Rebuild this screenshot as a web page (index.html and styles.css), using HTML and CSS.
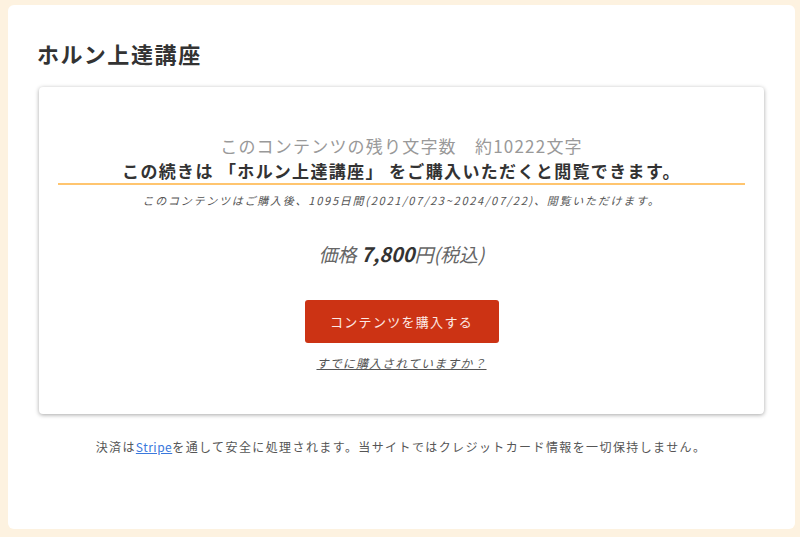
FILE: index.html
```html
<!DOCTYPE html>
<html lang="ja">
<head>
    <meta charset="UTF-8">
    <meta name="viewport" content="width=device-width, initial-scale=1.0">
    <title>ホルン上達講座</title>
    <link rel="stylesheet" href="styles.css">
</head>
<body>
    <div class="page">
        <h2 class="title">ホルン上達講座</h2>
        <div class="paywall">
            <p class="remain">このコンテンツの残り文字数　約10222文字</p>
            <p class="notice">この続きは 「ホルン上達講座」 をご購入いただくと閲覧できます。</p>
            <p class="period">このコンテンツはご購入後、1095日間(2021/07/23~2024/07/22)、閲覧いただけます。</p>
            <p class="price">価格 <b>7,800</b>円(税込)</p>
            <button class="buy">コンテンツを購入する</button>
            <a class="login" href="#">すでに購入されていますか？</a>
        </div>
        <p class="footer">決済は<a href="#">Stripe</a>を通して安全に処理されます。当サイトではクレジットカード情報を一切保持しません。</p>
    </div>
</body>
</html>
```

FILE: styles.css
```css
body {
    margin: 0;
    padding: 5px 5px 8px 8px;
    background-color: #fdf2e0;
    font-family: "Noto Sans CJK JP", "Noto Sans", sans-serif;
    color: #333;
}
.page {
    background-color: #fff;
    border-radius: 6px;
    height: 524px;
    box-sizing: border-box;
    padding: 28px 31px 0 30px;
}
.title {
    margin: 0 0 14px -1px;
    font-size: 22px;
    line-height: 40px;
    letter-spacing: 1.6px;
    font-weight: bold;
    color: #333;
}
.paywall {
    margin-left: 1px;
    border-radius: 4px;
    box-shadow: 0 1px 4px rgba(0,0,0,0.35);
    padding: 46px 19px 42px;
    display: flex;
    flex-direction: column;
    align-items: center;
    text-align: center;
}
.paywall p {
    margin: 0;
}
.remain {
    font-size: 17px;
    line-height: 25px;
    letter-spacing: 1.2px;
    color: #999;
}
.notice {
    align-self: stretch;
    font-size: 17px;
    line-height: 25px;
    letter-spacing: 1.35px;
    font-weight: bold;
    color: #333;
    border-bottom: 2px solid #ffc56f;
}
.period {
    margin-top: 7px !important;
    font-size: 11px;
    line-height: 17px;
    letter-spacing: 1.75px;
    font-style: italic;
    color: #555;
}
.price {
    margin-top: 30px !important;
    font-size: 19px;
    line-height: 30px;
    font-style: italic;
    color: #666;
}
.price b {
    color: #333;
    font-size: 20px;
}
.buy {
    margin-top: 31px;
    width: 194px;
    height: 43px;
    border: none;
    border-radius: 3px;
    background-color: #cc3314;
    color: #fde9e4;
    font-family: inherit;
    font-size: 13px;
    letter-spacing: 1.3px;
    cursor: pointer;
}
.login {
    margin-top: 11px;
    font-size: 12px;
    line-height: 18px;
    letter-spacing: 1.1px;
    font-style: italic;
    color: #555;
}
.footer {
    margin: 24px 0 0;
    text-align: center;
    font-size: 12px;
    letter-spacing: 1.4px;
    color: #555;
}
.footer a {
    color: #3a78dc;
    letter-spacing: 0.5px;
}
```
